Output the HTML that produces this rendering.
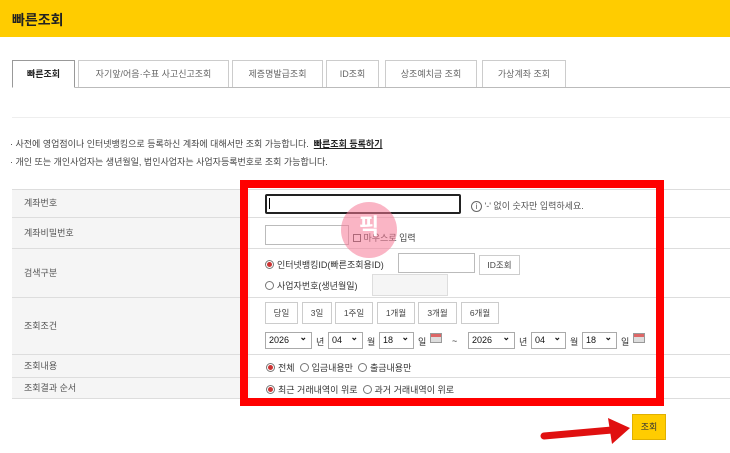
<!DOCTYPE html>
<html><head><meta charset="utf-8"><style>
*{margin:0;padding:0;box-sizing:border-box}
body{width:730px;height:453px;position:relative;background:#fff;font-family:"Liberation Sans","Noto Sans CJK KR",sans-serif;font-size:9px;color:#333;overflow:hidden}
.a{position:absolute}
.hdr{left:0;top:0;width:730px;height:37px;background:#ffcc00}
.hdr span{position:absolute;left:12px;top:10px;font-size:14px;font-weight:bold;color:#222}
.tab{position:absolute;top:60px;height:27px;border:1px solid #ccc;border-bottom:none;background:#fff;text-align:center;line-height:26px;color:#666;font-size:9px}
.tab.on{border:1px solid #999;border-bottom:1px solid #fff;color:#222;font-weight:bold;height:28px}
.row{position:absolute;left:12px;width:718px;border-bottom:1px solid #ddd}
.lab{position:absolute;left:12px;width:238px;background:#f5f5f5;padding-left:12px;color:#555}
.inp{position:absolute;border:1px solid #bbb;background:#fff}
.btn{position:absolute;border:1px solid #ccc;background:#fff;text-align:center;color:#444;font-size:8.5px;line-height:20px;height:22px}
.sel{position:absolute;border:1px solid #aaa;background:#fff;height:17px;font-size:9px;line-height:15px;padding-left:3px;color:#111}
.sel:after{content:"⌄";position:absolute;right:4px;top:-3px;font-weight:bold}
.rad{display:inline-block;width:9px;height:9px;border:1px solid #777;border-radius:50%;vertical-align:-1px;margin-right:3px;position:relative;background:#fff}
.rad.on:after{content:"";position:absolute;left:1px;top:1px;width:5px;height:5px;border-radius:50%;background:#c33}
.t{position:absolute;white-space:nowrap}
.cal{position:absolute;width:12px;height:10px;background:linear-gradient(#d66 0 3px,#ddd 3px);border:1px solid #999}
</style></head><body>
<div class="a hdr"><span>빠른조회</span></div>
<div class="a" style="left:12px;top:87px;width:718px;height:1px;background:#bbb"></div>
<div class="tab on" style="left:12px;width:63px">빠른조회</div>
<div class="tab" style="left:78px;width:151px">자기앞/어음·수표 사고신고조회</div>
<div class="tab" style="left:232px;width:91px">제증명발급조회</div>
<div class="tab" style="left:326px;width:53px">ID조회</div>
<div class="tab" style="left:385px;width:92px">상조예치금 조회</div>
<div class="tab" style="left:482px;width:84px">가상계좌 조회</div>
<div class="a" style="left:12px;top:117px;width:718px;height:1px;background:#eee"></div>
<div class="t" style="left:10px;top:137px;color:#444">· 사전에 영업점이나 인터넷뱅킹으로 등록하신 계좌에 대해서만 조회 가능합니다. &nbsp;<b style="text-decoration:underline;color:#222">빠른조회 등록하기</b></div>
<div class="t" style="left:10px;top:155px;color:#444">· 개인 또는 개인사업자는 생년월일, 법인사업자는 사업자등록번호로 조회 가능합니다.</div>

<div class="a" style="left:12px;top:189px;width:718px;height:1px;background:#ddd"></div>
<div class="lab" style="top:190px;height:27px;line-height:27px">계좌번호</div>
<div class="lab" style="top:218px;height:30px;line-height:30px">계좌비밀번호</div>
<div class="lab" style="top:249px;height:48px;line-height:48px">검색구분</div>
<div class="lab" style="top:298px;height:56px;line-height:56px">조회조건</div>
<div class="lab" style="top:355px;height:22px;line-height:22px">조회내용</div>
<div class="lab" style="top:378px;height:20px;line-height:20px">조회결과 순서</div>
<div class="row" style="top:217px"></div><div class="row" style="top:248px"></div><div class="row" style="top:297px"></div><div class="row" style="top:354px"></div><div class="row" style="top:377px"></div><div class="row" style="top:398px"></div>

<div class="a" style="left:240px;top:180px;width:424px;height:226px;border:8px solid #f00"></div>

<div class="inp" style="left:265px;top:194px;width:196px;height:20px;border:2px solid #222;border-radius:2px"></div>
<div class="a" style="left:269px;top:198px;width:1px;height:11px;background:#000"></div>
<div class="t" style="left:471px;top:199px;color:#555"><span style="display:inline-block;width:11px;height:11px;border:1px solid #666;border-radius:50%;text-align:center;line-height:9px;font-size:8px">i</span> '-' 없이 숫자만 입력하세요.</div>
<div class="inp" style="left:265px;top:225px;width:84px;height:20px"></div>
<div class="t" style="left:353px;top:231px;color:#444"><span style="display:inline-block;width:8px;height:8px;border:1px solid #555;vertical-align:-1px"></span> 마우스로 입력</div>
<div class="t" style="left:265px;top:258px;color:#333"><span class="rad on"></span>인터넷뱅킹ID(빠른조회용ID)</div>
<div class="inp" style="left:398px;top:253px;width:77px;height:20px"></div>
<div class="btn" style="left:479px;top:255px;width:41px;height:20px;line-height:18px">ID조회</div>
<div class="t" style="left:265px;top:279px;color:#333"><span class="rad"></span>사업자번호(생년월일)</div>
<div class="inp" style="left:372px;top:274px;width:76px;height:22px;background:#f5f5f5;border-color:#ddd"></div>

<div class="btn" style="left:265px;top:302px;width:33px">당일</div>
<div class="btn" style="left:302px;top:302px;width:30px">3일</div>
<div class="btn" style="left:335px;top:302px;width:38px">1주일</div>
<div class="btn" style="left:377px;top:302px;width:38px">1개월</div>
<div class="btn" style="left:418px;top:302px;width:39px">3개월</div>
<div class="btn" style="left:461px;top:302px;width:38px">6개월</div>

<div class="sel" style="left:265px;top:332px;width:47px">2026</div><div class="t" style="left:316px;top:335px">년</div>
<div class="sel" style="left:328px;top:332px;width:35px">04</div><div class="t" style="left:367px;top:335px">월</div>
<div class="sel" style="left:379px;top:332px;width:35px">18</div><div class="t" style="left:418px;top:335px">일</div>
<div class="cal" style="left:430px;top:333px"></div>
<div class="t" style="left:452px;top:336px">~</div>
<div class="sel" style="left:468px;top:332px;width:47px">2026</div><div class="t" style="left:519px;top:335px">년</div>
<div class="sel" style="left:531px;top:332px;width:35px">04</div><div class="t" style="left:570px;top:335px">월</div>
<div class="sel" style="left:582px;top:332px;width:35px">18</div><div class="t" style="left:621px;top:335px">일</div>
<div class="cal" style="left:633px;top:333px"></div>

<div class="t" style="left:266px;top:361px"><span class="rad on"></span>전체 &nbsp;<span class="rad"></span>입금내용만 &nbsp;<span class="rad"></span>출금내용만</div>
<div class="t" style="left:266px;top:383px"><span class="rad on"></span>최근 거래내역이 위로 &nbsp;<span class="rad"></span>과거 거래내역이 위로</div>

<div class="a" style="left:341px;top:202px;width:56px;height:56px;border-radius:50%;background:rgba(245,120,150,0.55);color:#fff;font-weight:bold;font-size:22px;text-align:center;line-height:50px">픽</div>

<div class="a" style="left:632px;top:414px;width:34px;height:26px;background:#ffcc00;border:1px solid #e0b000;text-align:center;line-height:24px;font-size:9px;color:#333">조회</div>
<svg class="a" style="left:538px;top:414px" width="96" height="32"><path d="M6 22 L74 16" stroke="#e01010" stroke-width="7" stroke-linecap="round"/><path d="M70 4 L92 14 L74 30 Z" fill="#e01010"/></svg>
</body></html>
